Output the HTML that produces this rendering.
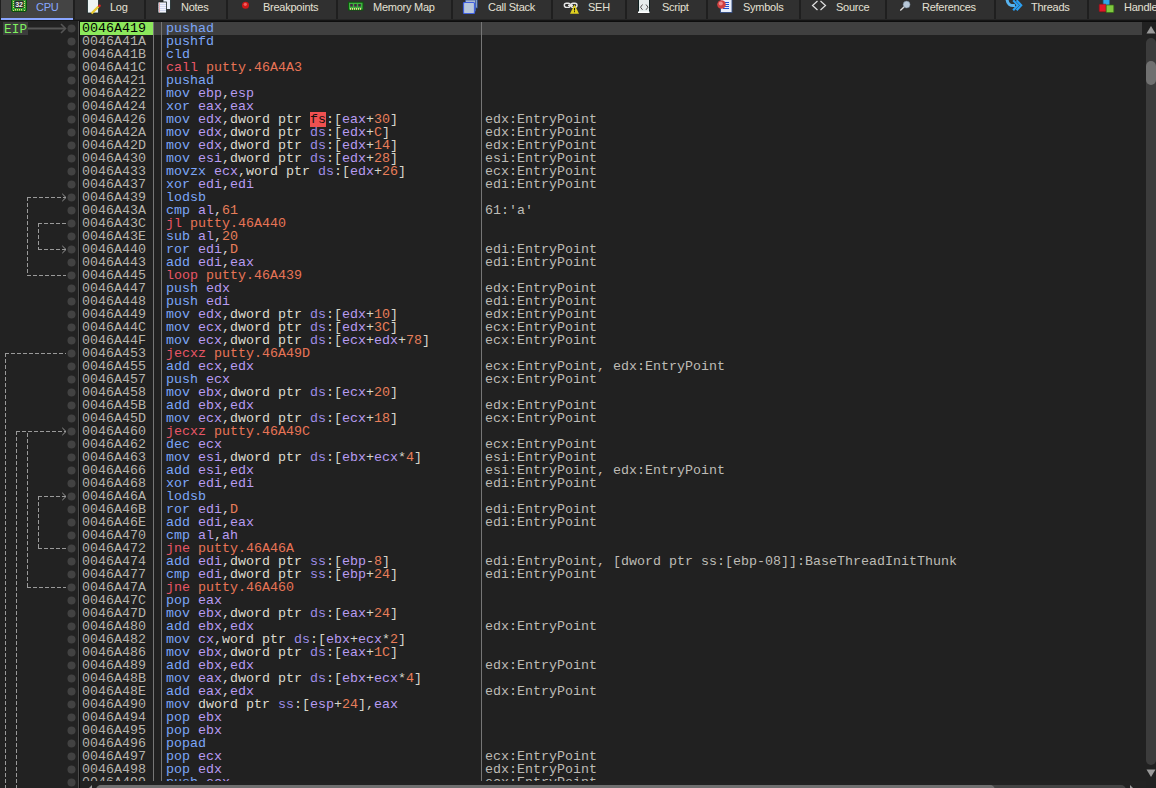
<!DOCTYPE html>
<html><head><meta charset="utf-8">
<style>
*{margin:0;padding:0;box-sizing:border-box}
html,body{width:1156px;height:788px;overflow:hidden;background:#222222}
body{position:relative;font-family:"Liberation Mono",monospace}
i{font-style:normal}
svg{display:block}
#tabbar{position:absolute;left:0;top:0;width:1156px;height:21px;background:linear-gradient(#1f1f1f 0,#1f1f1f 19px,#262626 19px,#262626 20px,#141414 20px);overflow:hidden;z-index:2}
.tab{position:absolute;top:0;height:19px;background:#303030;overflow:hidden;font-family:"Liberation Sans",sans-serif;font-size:11px;color:#e4e0d4}
.tab.act{background:#444444;height:20px;border-bottom:2px solid #8aa6ff}
.tl{position:absolute;left:35px;top:1px;line-height:12px;letter-spacing:-0.25px;white-space:nowrap}
.ic{position:absolute;left:0;top:0}
.act .tl{color:#88a8ff}
#strip{position:absolute;left:0;top:19px;width:1156px;height:2px;background:#242424}
#gut{position:absolute;left:0;top:21px;width:78px;height:767px;background:#222222;overflow:hidden}
#vsep0{position:absolute;left:78px;top:21px;width:1px;height:767px;background:#4c4c4c}
#tbl{position:absolute;left:79px;top:21px;width:1077px;height:767px;background:#212121;border-left:1px solid #0e0e0e;border-top:1px solid #0e0e0e}
#clip{position:absolute;left:80px;top:22px;width:1066px;height:759px;overflow:hidden}
.row{position:absolute;left:0;width:1062px;height:13px;line-height:13px;font-size:13.333px;white-space:pre}
.row span{position:absolute;top:0}
.ad{left:2px;color:#b6b3ad}
.cip{left:0;width:73px;background:#8ce85c;color:#000;padding-left:2px}
.ds{left:86px;color:#e0e0d8}
.cm{left:405px;color:#bebcb6}
.sel{background:#404040}
.m{color:#7ca6f8}
.j{color:#e85666}
.t{color:#e87456}
.r{color:#b89cf2}
.sg{color:#9e8ce6}
.sz{color:#dedcd0}
.n{color:#e87e5a}
.p{color:#d6d6ca}
.fs{background:#ee5050;color:#111}
.colsep{position:absolute;top:22px;width:1px;height:759px;background:#767676}
#vscroll{position:absolute;left:1146px;top:22px;width:10px;height:759px}
#hscroll{position:absolute;left:80px;top:781px;width:1066px;height:7px;background:#222222}
</style></head><body>
<div id="tabbar">
<div class="tab act" style="left:1px;width:72px"><svg class="ic" width="30" height="19" viewBox="0 0 30 19"><rect x="10.5" y="-3" width="15" height="14.5" rx="1.5" fill="#2f9a2f" stroke="#0d4d0d" stroke-width="1"/>
<g fill="#e8d27a"><rect x="12" y="1" width="1" height="1"/><rect x="12" y="3" width="1" height="1"/><rect x="12" y="5" width="1" height="1"/><rect x="12" y="7" width="1" height="1"/>
<rect x="23" y="1" width="1" height="1"/><rect x="23" y="3" width="1" height="1"/><rect x="23" y="5" width="1" height="1"/><rect x="23" y="7" width="1" height="1"/>
<rect x="14" y="9" width="1" height="1.5"/><rect x="16" y="9" width="1" height="1.5"/><rect x="18" y="9" width="1" height="1.5"/><rect x="20" y="9" width="1" height="1.5"/><rect x="12" y="10" width="1" height="1"/><rect x="23" y="10" width="1" height="1"/></g>
<rect x="13.5" y="0.5" width="9" height="7.5" rx="1" fill="#2a2a2a"/>
<text x="14.2" y="7" font-family="Liberation Sans" font-weight="bold" font-size="7" fill="#f0f0f0">32</text></svg><span class="tl">CPU</span></div>
<div class="tab" style="left:75px;width:69px"><svg class="ic" width="30" height="19" viewBox="0 0 30 19"><path d="M12.5,-3 H21 L23.5,-0.5 V13 H12.5 Z" fill="#eef4f4" stroke="#1a2a2a" stroke-width="0.8"/>
<path d="M16.5,13.5 L23.5,6.5" stroke="#e6c830" stroke-width="2.4"/>
<circle cx="24.5" cy="5.8" r="1.3" fill="#e02020"/></svg><span class="tl">Log</span></div>
<div class="tab" style="left:146px;width:80px"><svg class="ic" width="30" height="19" viewBox="0 0 30 19"><g transform="translate(-146,0)"><rect x="163" y="-2" width="7.5" height="11.5" fill="#e8eef8" stroke="#1a2626" stroke-width="0.8"/>
<rect x="158" y="2" width="8.5" height="11" fill="#f2f4fc" stroke="#1a2626" stroke-width="0.8"/>
<g stroke="#b8c4e8" stroke-width="0.6"><line x1="158.5" y1="4.5" x2="166" y2="4.5"/><line x1="158.5" y1="6.5" x2="166" y2="6.5"/><line x1="158.5" y1="8.5" x2="166" y2="8.5"/><line x1="158.5" y1="10.5" x2="166" y2="10.5"/></g>
<line x1="159.5" y1="2.5" x2="159.5" y2="12.5" stroke="#f0a0a0" stroke-width="0.7"/></g></svg><span class="tl">Notes</span></div>
<div class="tab" style="left:228px;width:108px"><svg class="ic" width="30" height="19" viewBox="0 0 30 19"><circle cx="17.5" cy="5.2" r="3.5" fill="#d01818"/><circle cx="17.3" cy="4.3" r="1.6" fill="#f06060"/></svg><span class="tl">Breakpoints</span></div>
<div class="tab" style="left:338px;width:113px"><svg class="ic" width="30" height="19" viewBox="0 0 30 19"><rect x="10.5" y="2.2" width="14.5" height="7.8" fill="#40b040" stroke="#0a5a0a" stroke-width="1"/>
<rect x="12.2" y="4" width="2.6" height="2.6" fill="#402a40"/><rect x="16.2" y="4" width="2.6" height="2.6" fill="#402a40"/><rect x="20.2" y="4" width="2.6" height="2.6" fill="#402a40"/>
<g fill="#f0d890"><rect x="12" y="8" width="1" height="1.8"/><rect x="14" y="8" width="1" height="1.8"/><rect x="16" y="8" width="1" height="1.8"/><rect x="18" y="8" width="1" height="1.8"/><rect x="20" y="8" width="1" height="1.8"/><rect x="22" y="8" width="1" height="1.8"/></g></svg><span class="tl">Memory Map</span></div>
<div class="tab" style="left:453px;width:98px"><svg class="ic" width="30" height="19" viewBox="0 0 30 19"><rect x="14.5" y="-2" width="10" height="10" fill="#8aa0c0" stroke="#2a4a8a" stroke-width="0.8"/>
<rect x="12.5" y="0" width="10" height="11" fill="#a8b8d0" stroke="#3a5aa0" stroke-width="0.8"/>
<rect x="10.5" y="2.5" width="11" height="11" rx="1" fill="#b8c8dc" stroke="#4060e0" stroke-width="1.2"/></svg><span class="tl">Call Stack</span></div>
<div class="tab" style="left:553px;width:72px"><svg class="ic" width="30" height="19" viewBox="0 0 30 19"><rect x="11.3" y="3.2" width="6" height="4.2" rx="2.1" fill="none" stroke="#e8e8e8" stroke-width="1.4"/>
<rect x="18" y="3.2" width="6" height="4.2" rx="2.1" fill="none" stroke="#e8e8e8" stroke-width="1.4"/>
<line x1="15" y1="5.3" x2="20" y2="5.3" stroke="#e8e8e8" stroke-width="1.4"/>
<path d="M21.5,4.5 L26,13.8 H17 Z" fill="#e0d020"/><rect x="21" y="8" width="1" height="2.5" fill="#111"/><rect x="21" y="11.2" width="1" height="1" fill="#111"/></svg><span class="tl">SEH</span></div>
<div class="tab" style="left:627px;width:79px"><svg class="ic" width="30" height="19" viewBox="0 0 30 19"><rect x="11.5" y="-2" width="11" height="14.5" fill="#e4ecec" stroke="#102020" stroke-width="1"/>
<rect x="11" y="11.5" width="11.5" height="1.5" fill="#ffffff"/>
<path d="M15.5,4.5 L13.5,7.2 L15.5,9.8 M19,4.5 L21,7.2 L19,9.8" stroke="#505050" stroke-width="1" fill="none"/></svg><span class="tl">Script</span></div>
<div class="tab" style="left:708px;width:91px"><svg class="ic" width="30" height="19" viewBox="0 0 30 19"><rect x="12.5" y="-2" width="11.5" height="14.5" fill="#e8eefa" stroke="#304a80" stroke-width="0.9"/>
<g stroke="#2050d0" stroke-width="1"><line x1="15" y1="2.5" x2="21" y2="2.5"/><line x1="15" y1="4.5" x2="21" y2="4.5"/><line x1="15" y1="6.5" x2="21" y2="6.5"/><line x1="15" y1="8.5" x2="21" y2="8.5"/></g>
<circle cx="13.5" cy="4.5" r="4.3" fill="#d04040"/><circle cx="12.8" cy="3.5" r="2" fill="#f08888"/></svg><span class="tl">Symbols</span></div>
<div class="tab" style="left:801px;width:84px"><svg class="ic" width="30" height="19" viewBox="0 0 30 19"><path d="M16.5,1 L11.5,5.5 L16.5,10 M19.5,1 L24.5,5.5 L19.5,10" stroke="#e0e0e0" stroke-width="1.2" fill="none"/></svg><span class="tl">Source</span></div>
<div class="tab" style="left:887px;width:107px"><svg class="ic" width="30" height="19" viewBox="0 0 30 19"><line x1="13.3" y1="10.5" x2="17.2" y2="6.8" stroke="#e0e0e0" stroke-width="1.3"/>
<circle cx="19.6" cy="4.6" r="3.5" fill="#b8c8d8" stroke="#607080" stroke-width="0.5"/></svg><span class="tl">References</span></div>
<div class="tab" style="left:996px;width:91px"><svg class="ic" width="30" height="19" viewBox="0 0 30 19"><path d="M11,-1 Q11.5,6.5 19,5.5" stroke="#58b4f0" stroke-width="3" fill="none"/>
<polyline points="17.2,0.3 21.8,5.3 17.2,10.3" stroke="#2a9ef0" stroke-width="2.2" fill="none"/>
<polyline points="20.6,0.3 25.2,5.3 20.6,10.3" stroke="#2a9ef0" stroke-width="2.2" fill="none"/></svg><span class="tl">Threads</span></div>
<div class="tab" style="left:1089px;width:91px"><svg class="ic" width="30" height="19" viewBox="0 0 30 19"><rect x="14.2" y="-3" width="6.2" height="8" rx="0.8" fill="#30a8e8" stroke="#1a70b0" stroke-width="0.6"/>
<rect x="10.2" y="4.2" width="7" height="7.5" rx="0.8" fill="#e01828" stroke="#901018" stroke-width="0.6"/>
<rect x="17.2" y="5" width="7.6" height="7.5" rx="0.8" fill="#80c840" stroke="#307010" stroke-width="0.7"/></svg><span class="tl">Handles</span></div>
</div>
<div id="gut">
<svg width="78" height="767" viewBox="0 21 78 767" style="position:absolute;left:0;top:0">
<g fill="#424242">
<circle cx="71.5" cy="28.5" r="4"/>
<circle cx="71.5" cy="41.5" r="4"/>
<circle cx="71.5" cy="54.5" r="4"/>
<circle cx="71.5" cy="67.5" r="4"/>
<circle cx="71.5" cy="80.5" r="4"/>
<circle cx="71.5" cy="93.5" r="4"/>
<circle cx="71.5" cy="106.5" r="4"/>
<circle cx="71.5" cy="119.5" r="4"/>
<circle cx="71.5" cy="132.5" r="4"/>
<circle cx="71.5" cy="145.5" r="4"/>
<circle cx="71.5" cy="158.5" r="4"/>
<circle cx="71.5" cy="171.5" r="4"/>
<circle cx="71.5" cy="184.5" r="4"/>
<circle cx="71.5" cy="197.5" r="4"/>
<circle cx="71.5" cy="210.5" r="4"/>
<circle cx="71.5" cy="223.5" r="4"/>
<circle cx="71.5" cy="236.5" r="4"/>
<circle cx="71.5" cy="249.5" r="4"/>
<circle cx="71.5" cy="262.5" r="4"/>
<circle cx="71.5" cy="275.5" r="4"/>
<circle cx="71.5" cy="288.5" r="4"/>
<circle cx="71.5" cy="301.5" r="4"/>
<circle cx="71.5" cy="314.5" r="4"/>
<circle cx="71.5" cy="327.5" r="4"/>
<circle cx="71.5" cy="340.5" r="4"/>
<circle cx="71.5" cy="353.5" r="4"/>
<circle cx="71.5" cy="366.5" r="4"/>
<circle cx="71.5" cy="379.5" r="4"/>
<circle cx="71.5" cy="392.5" r="4"/>
<circle cx="71.5" cy="405.5" r="4"/>
<circle cx="71.5" cy="418.5" r="4"/>
<circle cx="71.5" cy="431.5" r="4"/>
<circle cx="71.5" cy="444.5" r="4"/>
<circle cx="71.5" cy="457.5" r="4"/>
<circle cx="71.5" cy="470.5" r="4"/>
<circle cx="71.5" cy="483.5" r="4"/>
<circle cx="71.5" cy="496.5" r="4"/>
<circle cx="71.5" cy="509.5" r="4"/>
<circle cx="71.5" cy="522.5" r="4"/>
<circle cx="71.5" cy="535.5" r="4"/>
<circle cx="71.5" cy="548.5" r="4"/>
<circle cx="71.5" cy="561.5" r="4"/>
<circle cx="71.5" cy="574.5" r="4"/>
<circle cx="71.5" cy="587.5" r="4"/>
<circle cx="71.5" cy="600.5" r="4"/>
<circle cx="71.5" cy="613.5" r="4"/>
<circle cx="71.5" cy="626.5" r="4"/>
<circle cx="71.5" cy="639.5" r="4"/>
<circle cx="71.5" cy="652.5" r="4"/>
<circle cx="71.5" cy="665.5" r="4"/>
<circle cx="71.5" cy="678.5" r="4"/>
<circle cx="71.5" cy="691.5" r="4"/>
<circle cx="71.5" cy="704.5" r="4"/>
<circle cx="71.5" cy="717.5" r="4"/>
<circle cx="71.5" cy="730.5" r="4"/>
<circle cx="71.5" cy="743.5" r="4"/>
<circle cx="71.5" cy="756.5" r="4"/>
<circle cx="71.5" cy="769.5" r="4"/>
<circle cx="71.5" cy="782.5" r="4"/>
</g>
<g stroke="#9a9a9a" stroke-width="1" stroke-dasharray="4,2" fill="none">
<line x1="27" y1="197.5" x2="66" y2="197.5"/>
<line x1="27.5" y1="197" x2="27.5" y2="275"/>
<line x1="27" y1="275.5" x2="66" y2="275.5"/>
<line x1="38" y1="223.5" x2="66" y2="223.5"/>
<line x1="38.5" y1="223" x2="38.5" y2="249"/>
<line x1="38" y1="249.5" x2="66" y2="249.5"/>
<line x1="5" y1="353.5" x2="66" y2="353.5"/>
<line x1="5.5" y1="353" x2="5.5" y2="790"/>
<line x1="16" y1="431.5" x2="66" y2="431.5"/>
<line x1="16.5" y1="431" x2="16.5" y2="790"/>
<line x1="27.5" y1="433" x2="27.5" y2="587"/>
<line x1="27" y1="587.5" x2="66" y2="587.5"/>
<line x1="38" y1="496.5" x2="66" y2="496.5"/>
<line x1="38.5" y1="496" x2="38.5" y2="548"/>
<line x1="38" y1="548.5" x2="66" y2="548.5"/>
</g>
<g stroke="#9a9a9a" stroke-width="1" fill="none">
<polyline points="62.3,193.9 66,197.5 62.3,201.1"/>
<polyline points="62.3,245.9 66,249.5 62.3,253.1"/>
<polyline points="62.3,427.9 66,431.5 62.3,435.1"/>
<polyline points="62.3,492.9 66,496.5 62.3,500.1"/>
</g>
<rect x="3" y="22" width="25" height="13" fill="#3c3c3c"/>
<text x="4" y="32.8" font-family="Liberation Mono" font-size="12.6" textLength="23" fill="#80f060">EIP</text>
<line x1="28" y1="28.5" x2="65" y2="28.5" stroke="#555" stroke-width="2"/>
<polyline points="61,24 65.5,28.5 61,33" stroke="#555" stroke-width="1.6" fill="none"/>
</svg>
</div>
<div id="vsep0"></div>
<div id="tbl"></div>
<div id="clip">
<div class="row sel" style="top:0px">
<span class="ad cip">0046A419</span>
<span class="ds"><i class="m">pushad</i></span>
</div>
<div class="row" style="top:13px">
<span class="ad">0046A41A</span>
<span class="ds"><i class="m">pushfd</i></span>
</div>
<div class="row" style="top:26px">
<span class="ad">0046A41B</span>
<span class="ds"><i class="m">cld</i></span>
</div>
<div class="row" style="top:39px">
<span class="ad">0046A41C</span>
<span class="ds"><i class="j">call</i> <i class="t">putty.46A4A3</i></span>
</div>
<div class="row" style="top:52px">
<span class="ad">0046A421</span>
<span class="ds"><i class="m">pushad</i></span>
</div>
<div class="row" style="top:65px">
<span class="ad">0046A422</span>
<span class="ds"><i class="m">mov</i> <i class="r">ebp</i><i class="p">,</i><i class="r">esp</i></span>
</div>
<div class="row" style="top:78px">
<span class="ad">0046A424</span>
<span class="ds"><i class="m">xor</i> <i class="r">eax</i><i class="p">,</i><i class="r">eax</i></span>
</div>
<div class="row" style="top:91px">
<span class="ad">0046A426</span>
<span class="ds"><i class="m">mov</i> <i class="r">edx</i><i class="p">,</i><i class="sz">dword</i> <i class="sz">ptr</i> <i class="fs">fs</i><i class="p">:</i><i class="p">[</i><i class="r">eax</i><i class="p">+</i><i class="n">30</i><i class="p">]</i></span>
<span class="cm">edx:EntryPoint</span>
</div>
<div class="row" style="top:104px">
<span class="ad">0046A42A</span>
<span class="ds"><i class="m">mov</i> <i class="r">edx</i><i class="p">,</i><i class="sz">dword</i> <i class="sz">ptr</i> <i class="sg">ds</i><i class="p">:</i><i class="p">[</i><i class="r">edx</i><i class="p">+</i><i class="n">C</i><i class="p">]</i></span>
<span class="cm">edx:EntryPoint</span>
</div>
<div class="row" style="top:117px">
<span class="ad">0046A42D</span>
<span class="ds"><i class="m">mov</i> <i class="r">edx</i><i class="p">,</i><i class="sz">dword</i> <i class="sz">ptr</i> <i class="sg">ds</i><i class="p">:</i><i class="p">[</i><i class="r">edx</i><i class="p">+</i><i class="n">14</i><i class="p">]</i></span>
<span class="cm">edx:EntryPoint</span>
</div>
<div class="row" style="top:130px">
<span class="ad">0046A430</span>
<span class="ds"><i class="m">mov</i> <i class="r">esi</i><i class="p">,</i><i class="sz">dword</i> <i class="sz">ptr</i> <i class="sg">ds</i><i class="p">:</i><i class="p">[</i><i class="r">edx</i><i class="p">+</i><i class="n">28</i><i class="p">]</i></span>
<span class="cm">esi:EntryPoint</span>
</div>
<div class="row" style="top:143px">
<span class="ad">0046A433</span>
<span class="ds"><i class="m">movzx</i> <i class="r">ecx</i><i class="p">,</i><i class="sz">word</i> <i class="sz">ptr</i> <i class="sg">ds</i><i class="p">:</i><i class="p">[</i><i class="r">edx</i><i class="p">+</i><i class="n">26</i><i class="p">]</i></span>
<span class="cm">ecx:EntryPoint</span>
</div>
<div class="row" style="top:156px">
<span class="ad">0046A437</span>
<span class="ds"><i class="m">xor</i> <i class="r">edi</i><i class="p">,</i><i class="r">edi</i></span>
<span class="cm">edi:EntryPoint</span>
</div>
<div class="row" style="top:169px">
<span class="ad">0046A439</span>
<span class="ds"><i class="m">lodsb</i></span>
</div>
<div class="row" style="top:182px">
<span class="ad">0046A43A</span>
<span class="ds"><i class="m">cmp</i> <i class="r">al</i><i class="p">,</i><i class="n">61</i></span>
<span class="cm">61:'a'</span>
</div>
<div class="row" style="top:195px">
<span class="ad">0046A43C</span>
<span class="ds"><i class="j">jl</i> <i class="t">putty.46A440</i></span>
</div>
<div class="row" style="top:208px">
<span class="ad">0046A43E</span>
<span class="ds"><i class="m">sub</i> <i class="r">al</i><i class="p">,</i><i class="n">20</i></span>
</div>
<div class="row" style="top:221px">
<span class="ad">0046A440</span>
<span class="ds"><i class="m">ror</i> <i class="r">edi</i><i class="p">,</i><i class="n">D</i></span>
<span class="cm">edi:EntryPoint</span>
</div>
<div class="row" style="top:234px">
<span class="ad">0046A443</span>
<span class="ds"><i class="m">add</i> <i class="r">edi</i><i class="p">,</i><i class="r">eax</i></span>
<span class="cm">edi:EntryPoint</span>
</div>
<div class="row" style="top:247px">
<span class="ad">0046A445</span>
<span class="ds"><i class="j">loop</i> <i class="t">putty.46A439</i></span>
</div>
<div class="row" style="top:260px">
<span class="ad">0046A447</span>
<span class="ds"><i class="m">push</i> <i class="r">edx</i></span>
<span class="cm">edx:EntryPoint</span>
</div>
<div class="row" style="top:273px">
<span class="ad">0046A448</span>
<span class="ds"><i class="m">push</i> <i class="r">edi</i></span>
<span class="cm">edi:EntryPoint</span>
</div>
<div class="row" style="top:286px">
<span class="ad">0046A449</span>
<span class="ds"><i class="m">mov</i> <i class="r">edx</i><i class="p">,</i><i class="sz">dword</i> <i class="sz">ptr</i> <i class="sg">ds</i><i class="p">:</i><i class="p">[</i><i class="r">edx</i><i class="p">+</i><i class="n">10</i><i class="p">]</i></span>
<span class="cm">edx:EntryPoint</span>
</div>
<div class="row" style="top:299px">
<span class="ad">0046A44C</span>
<span class="ds"><i class="m">mov</i> <i class="r">ecx</i><i class="p">,</i><i class="sz">dword</i> <i class="sz">ptr</i> <i class="sg">ds</i><i class="p">:</i><i class="p">[</i><i class="r">edx</i><i class="p">+</i><i class="n">3C</i><i class="p">]</i></span>
<span class="cm">ecx:EntryPoint</span>
</div>
<div class="row" style="top:312px">
<span class="ad">0046A44F</span>
<span class="ds"><i class="m">mov</i> <i class="r">ecx</i><i class="p">,</i><i class="sz">dword</i> <i class="sz">ptr</i> <i class="sg">ds</i><i class="p">:</i><i class="p">[</i><i class="r">ecx</i><i class="p">+</i><i class="r">edx</i><i class="p">+</i><i class="n">78</i><i class="p">]</i></span>
<span class="cm">ecx:EntryPoint</span>
</div>
<div class="row" style="top:325px">
<span class="ad">0046A453</span>
<span class="ds"><i class="j">jecxz</i> <i class="t">putty.46A49D</i></span>
</div>
<div class="row" style="top:338px">
<span class="ad">0046A455</span>
<span class="ds"><i class="m">add</i> <i class="r">ecx</i><i class="p">,</i><i class="r">edx</i></span>
<span class="cm">ecx:EntryPoint, edx:EntryPoint</span>
</div>
<div class="row" style="top:351px">
<span class="ad">0046A457</span>
<span class="ds"><i class="m">push</i> <i class="r">ecx</i></span>
<span class="cm">ecx:EntryPoint</span>
</div>
<div class="row" style="top:364px">
<span class="ad">0046A458</span>
<span class="ds"><i class="m">mov</i> <i class="r">ebx</i><i class="p">,</i><i class="sz">dword</i> <i class="sz">ptr</i> <i class="sg">ds</i><i class="p">:</i><i class="p">[</i><i class="r">ecx</i><i class="p">+</i><i class="n">20</i><i class="p">]</i></span>
</div>
<div class="row" style="top:377px">
<span class="ad">0046A45B</span>
<span class="ds"><i class="m">add</i> <i class="r">ebx</i><i class="p">,</i><i class="r">edx</i></span>
<span class="cm">edx:EntryPoint</span>
</div>
<div class="row" style="top:390px">
<span class="ad">0046A45D</span>
<span class="ds"><i class="m">mov</i> <i class="r">ecx</i><i class="p">,</i><i class="sz">dword</i> <i class="sz">ptr</i> <i class="sg">ds</i><i class="p">:</i><i class="p">[</i><i class="r">ecx</i><i class="p">+</i><i class="n">18</i><i class="p">]</i></span>
<span class="cm">ecx:EntryPoint</span>
</div>
<div class="row" style="top:403px">
<span class="ad">0046A460</span>
<span class="ds"><i class="j">jecxz</i> <i class="t">putty.46A49C</i></span>
</div>
<div class="row" style="top:416px">
<span class="ad">0046A462</span>
<span class="ds"><i class="m">dec</i> <i class="r">ecx</i></span>
<span class="cm">ecx:EntryPoint</span>
</div>
<div class="row" style="top:429px">
<span class="ad">0046A463</span>
<span class="ds"><i class="m">mov</i> <i class="r">esi</i><i class="p">,</i><i class="sz">dword</i> <i class="sz">ptr</i> <i class="sg">ds</i><i class="p">:</i><i class="p">[</i><i class="r">ebx</i><i class="p">+</i><i class="r">ecx</i><i class="p">*</i><i class="n">4</i><i class="p">]</i></span>
<span class="cm">esi:EntryPoint</span>
</div>
<div class="row" style="top:442px">
<span class="ad">0046A466</span>
<span class="ds"><i class="m">add</i> <i class="r">esi</i><i class="p">,</i><i class="r">edx</i></span>
<span class="cm">esi:EntryPoint, edx:EntryPoint</span>
</div>
<div class="row" style="top:455px">
<span class="ad">0046A468</span>
<span class="ds"><i class="m">xor</i> <i class="r">edi</i><i class="p">,</i><i class="r">edi</i></span>
<span class="cm">edi:EntryPoint</span>
</div>
<div class="row" style="top:468px">
<span class="ad">0046A46A</span>
<span class="ds"><i class="m">lodsb</i></span>
</div>
<div class="row" style="top:481px">
<span class="ad">0046A46B</span>
<span class="ds"><i class="m">ror</i> <i class="r">edi</i><i class="p">,</i><i class="n">D</i></span>
<span class="cm">edi:EntryPoint</span>
</div>
<div class="row" style="top:494px">
<span class="ad">0046A46E</span>
<span class="ds"><i class="m">add</i> <i class="r">edi</i><i class="p">,</i><i class="r">eax</i></span>
<span class="cm">edi:EntryPoint</span>
</div>
<div class="row" style="top:507px">
<span class="ad">0046A470</span>
<span class="ds"><i class="m">cmp</i> <i class="r">al</i><i class="p">,</i><i class="r">ah</i></span>
</div>
<div class="row" style="top:520px">
<span class="ad">0046A472</span>
<span class="ds"><i class="j">jne</i> <i class="t">putty.46A46A</i></span>
</div>
<div class="row" style="top:533px">
<span class="ad">0046A474</span>
<span class="ds"><i class="m">add</i> <i class="r">edi</i><i class="p">,</i><i class="sz">dword</i> <i class="sz">ptr</i> <i class="sg">ss</i><i class="p">:</i><i class="p">[</i><i class="r">ebp</i><i class="p">-</i><i class="n">8</i><i class="p">]</i></span>
<span class="cm">edi:EntryPoint, [dword ptr ss:[ebp-08]]:BaseThreadInitThunk</span>
</div>
<div class="row" style="top:546px">
<span class="ad">0046A477</span>
<span class="ds"><i class="m">cmp</i> <i class="r">edi</i><i class="p">,</i><i class="sz">dword</i> <i class="sz">ptr</i> <i class="sg">ss</i><i class="p">:</i><i class="p">[</i><i class="r">ebp</i><i class="p">+</i><i class="n">24</i><i class="p">]</i></span>
<span class="cm">edi:EntryPoint</span>
</div>
<div class="row" style="top:559px">
<span class="ad">0046A47A</span>
<span class="ds"><i class="j">jne</i> <i class="t">putty.46A460</i></span>
</div>
<div class="row" style="top:572px">
<span class="ad">0046A47C</span>
<span class="ds"><i class="m">pop</i> <i class="r">eax</i></span>
</div>
<div class="row" style="top:585px">
<span class="ad">0046A47D</span>
<span class="ds"><i class="m">mov</i> <i class="r">ebx</i><i class="p">,</i><i class="sz">dword</i> <i class="sz">ptr</i> <i class="sg">ds</i><i class="p">:</i><i class="p">[</i><i class="r">eax</i><i class="p">+</i><i class="n">24</i><i class="p">]</i></span>
</div>
<div class="row" style="top:598px">
<span class="ad">0046A480</span>
<span class="ds"><i class="m">add</i> <i class="r">ebx</i><i class="p">,</i><i class="r">edx</i></span>
<span class="cm">edx:EntryPoint</span>
</div>
<div class="row" style="top:611px">
<span class="ad">0046A482</span>
<span class="ds"><i class="m">mov</i> <i class="r">cx</i><i class="p">,</i><i class="sz">word</i> <i class="sz">ptr</i> <i class="sg">ds</i><i class="p">:</i><i class="p">[</i><i class="r">ebx</i><i class="p">+</i><i class="r">ecx</i><i class="p">*</i><i class="n">2</i><i class="p">]</i></span>
</div>
<div class="row" style="top:624px">
<span class="ad">0046A486</span>
<span class="ds"><i class="m">mov</i> <i class="r">ebx</i><i class="p">,</i><i class="sz">dword</i> <i class="sz">ptr</i> <i class="sg">ds</i><i class="p">:</i><i class="p">[</i><i class="r">eax</i><i class="p">+</i><i class="n">1C</i><i class="p">]</i></span>
</div>
<div class="row" style="top:637px">
<span class="ad">0046A489</span>
<span class="ds"><i class="m">add</i> <i class="r">ebx</i><i class="p">,</i><i class="r">edx</i></span>
<span class="cm">edx:EntryPoint</span>
</div>
<div class="row" style="top:650px">
<span class="ad">0046A48B</span>
<span class="ds"><i class="m">mov</i> <i class="r">eax</i><i class="p">,</i><i class="sz">dword</i> <i class="sz">ptr</i> <i class="sg">ds</i><i class="p">:</i><i class="p">[</i><i class="r">ebx</i><i class="p">+</i><i class="r">ecx</i><i class="p">*</i><i class="n">4</i><i class="p">]</i></span>
</div>
<div class="row" style="top:663px">
<span class="ad">0046A48E</span>
<span class="ds"><i class="m">add</i> <i class="r">eax</i><i class="p">,</i><i class="r">edx</i></span>
<span class="cm">edx:EntryPoint</span>
</div>
<div class="row" style="top:676px">
<span class="ad">0046A490</span>
<span class="ds"><i class="m">mov</i> <i class="sz">dword</i> <i class="sz">ptr</i> <i class="sg">ss</i><i class="p">:</i><i class="p">[</i><i class="r">esp</i><i class="p">+</i><i class="n">24</i><i class="p">]</i><i class="p">,</i><i class="r">eax</i></span>
</div>
<div class="row" style="top:689px">
<span class="ad">0046A494</span>
<span class="ds"><i class="m">pop</i> <i class="r">ebx</i></span>
</div>
<div class="row" style="top:702px">
<span class="ad">0046A495</span>
<span class="ds"><i class="m">pop</i> <i class="r">ebx</i></span>
</div>
<div class="row" style="top:715px">
<span class="ad">0046A496</span>
<span class="ds"><i class="m">popad</i></span>
</div>
<div class="row" style="top:728px">
<span class="ad">0046A497</span>
<span class="ds"><i class="m">pop</i> <i class="r">ecx</i></span>
<span class="cm">ecx:EntryPoint</span>
</div>
<div class="row" style="top:741px">
<span class="ad">0046A498</span>
<span class="ds"><i class="m">pop</i> <i class="r">edx</i></span>
<span class="cm">edx:EntryPoint</span>
</div>
<div class="row" style="top:754px">
<span class="ad">0046A499</span>
<span class="ds"><i class="m">push</i> <i class="r">ecx</i></span>
<span class="cm">ecx:EntryPoint</span>
</div>
</div>
<div class="colsep" style="left:153px"></div>
<div class="colsep" style="left:161px"></div>
<div class="colsep" style="left:481px"></div>
<div id="vscroll">
<svg width="10" height="766" viewBox="0 0 10 766">
<polygon points="5,4 9.5,11.5 0.5,11.5" fill="#9a9a9a"/>
<rect x="0" y="16" width="10" height="727" rx="5" fill="#3c3c3c"/>
<rect x="0" y="39" width="10" height="24" rx="5" fill="#707070"/>
<polygon points="0.5,747.5 9.5,747.5 5,755" fill="#9a9a9a"/>
</svg>
</div>
<div id="hscroll">
<svg width="1066" height="7" viewBox="0 0 1066 7">
<rect x="16" y="4" width="1030" height="10" rx="5" fill="#444"/>
<rect x="16" y="4" width="899" height="10" rx="5" fill="#707070"/>
<polygon points="8,8 12,4 12,8" fill="#9a9a9a"/>
<polygon points="1050,4 1054,8 1050,8" fill="#9a9a9a"/>
</svg>
</div>
</body></html>
